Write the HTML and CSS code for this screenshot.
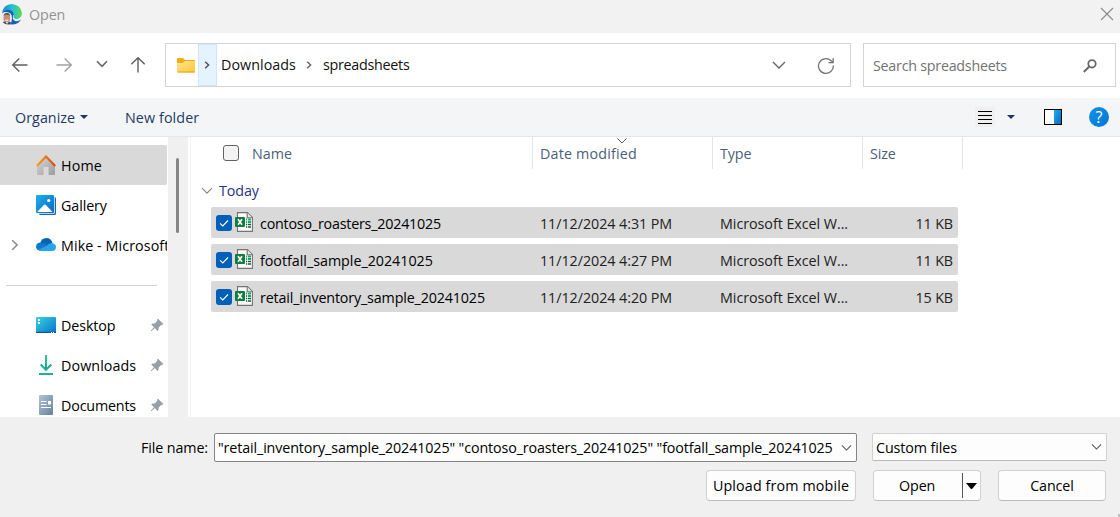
FILE: index.html
```html
<!DOCTYPE html>
<html lang="en">
<head>
<meta charset="utf-8">
<title>Open</title>
<link rel="stylesheet" href="styles.css">
</head>
<body>
<svg width="0" height="0" class="defs">
  <defs>
    <linearGradient id="edge" x1="0" y1="0" x2="1" y2="0"><stop offset="0" stop-color="#1287d8"/><stop offset=".5" stop-color="#25bfd0"/><stop offset="1" stop-color="#62d957"/></linearGradient>
    <linearGradient id="folder" x1="0" y1="0" x2="1" y2="1"><stop offset="0" stop-color="#ffe597"/><stop offset="1" stop-color="#ffc62f"/></linearGradient>
    <linearGradient id="blue" x1="0" y1="0" x2="1" y2="1"><stop offset="0" stop-color="#1eb0ee"/><stop offset="1" stop-color="#0869c4"/></linearGradient>
    <linearGradient id="wall" x1="0" y1="0" x2="1" y2="1"><stop offset="0" stop-color="#d8d8d8"/><stop offset="1" stop-color="#9c9c9c"/></linearGradient>
    <linearGradient id="roof" x1="0" y1="0" x2="1" y2="0"><stop offset="0" stop-color="#f9a11b"/><stop offset="1" stop-color="#d84a12"/></linearGradient>
    <linearGradient id="desk" x1="0" y1="0" x2="1" y2="1"><stop offset="0" stop-color="#35d4e2"/><stop offset="1" stop-color="#0b72c9"/></linearGradient>
    <linearGradient id="down" x1="0" y1="0" x2="0" y2="1"><stop offset="0" stop-color="#38c98c"/><stop offset="1" stop-color="#14a79b"/></linearGradient>
    <linearGradient id="doc" x1="0" y1="0" x2="1" y2="1"><stop offset="0" stop-color="#b2c3d6"/><stop offset="1" stop-color="#65819f"/></linearGradient>
    <symbol id="excel" viewBox="0 0 18 20">
      <path d="M2.5.6H12.4L17.4 5.6V19.4H2.5Z" fill="#fafafa" stroke="#737373" stroke-width="1.1"/>
      <path d="M12.2.8V5.8H17.2" fill="#e6e6e6" stroke="#737373" stroke-width="1.1"/>
      <path d="M11 7.500H12.200M13 7.500H16M11 10H12.200M13 10H16" stroke="#21a567" stroke-width="1.8"/>
      <path d="M11 12.500H12.200M13 12.500H16M11 15H12.200M13 15H16" stroke="#185c37" stroke-width="1.6"/>
      <rect y="5" width="10" height="10" rx="1" fill="#107c41"/>
      <path d="M3 7.2L7 12.8M7 7.2L3 12.8" stroke="#fff" stroke-width="1.6"/>
    </symbol>
    <symbol id="check" viewBox="0 0 16 16"><rect width="16" height="16" rx="3" fill="#005fb8"/><path d="M4 8.3L6.8 11L12 5.5" fill="none" stroke="#fff" stroke-width="1.1"/></symbol>
    <symbol id="pin" viewBox="0 0 14 14"><path d="M8 .7L13.3 6 12.3 7.1 11.4 6.8 8.7 9.6 8.5 12 7.5 12.9 4.8 10.1 1.3 13.3.7 12.7 3.9 9.2 1.3 6.5 2.3 5.5 4.8 5.4 7.3 2.7 7 1.7Z" fill="#949fa9"/></symbol>
    <symbol id="chev" viewBox="0 0 12 8"><path d="M1 1.2L6 6.2L11 1.2" fill="none" stroke="currentColor" stroke-width="1.2"/></symbol>
  </defs>
</svg>
<div class="dialog">
  <header class="titlebar">
    <svg class="app" width="21" height="21" viewBox="0 0 21 21">
      <path d="M1 10Q2 0 11 0Q20 1 21 9Q21 14 16 15Q11 15 13 11Q12 7 8 7L1 14Z" fill="url(#edge)"/>
      <path d="M1 10Q4 5 9 6Q12 7 13 10Q10 15 14 17Q17 18 20 15.500Q17 21 10 20.500L3 17Z" fill="#1263ae"/>
      <path d="M0 13Q0 8 5 8Q11 8 11 14Q11 18 9 20Q3 20 0 15Z" fill="#eceaea"/>
      <ellipse cx="5.800" cy="14" rx="3.300" ry="4.300" fill="#c98e78"/>
      <path d="M2.500 12Q3 9 6 9Q9 9 9 12L7.500 10.800H4Z" fill="#5a4640"/>
      <path d="M4.300 16.200H7.300" stroke="#fff"/>
      <path d="M1.500 18L4 17.500 6 20 8 17.500 10 18.500 9 20.500Q4 21 1.500 18Z" fill="#394b66"/>
    </svg>
    <span class="title">Open</span>
    <svg class="close" width="14" height="14" viewBox="0 0 14 14"><path d="M1 1L13 13M13 1L1 13" stroke="#8a8a8a" stroke-width="1.1"/></svg>
  </header>
  <nav class="navbar">
    <div class="arrows">
      <svg width="18" height="16" viewBox="0 0 18 16"><path d="M16.500 8H2M8.300 1.500L1.700 8L8.300 14.500" fill="none" stroke="#5f5f5f" stroke-width="1.400"/></svg>
      <svg width="18" height="16" viewBox="0 0 18 16"><path d="M1.500 8H16M9.700 1.500L16.300 8L9.700 14.500" fill="none" stroke="#a2a2a2" stroke-width="1.400"/></svg>
      <svg width="12" height="8" viewBox="0 0 12 8"><path d="M1 1.300L6 6.300L11 1.300" fill="none" stroke="#666" stroke-width="1.600"/></svg>
      <svg width="16" height="18" viewBox="0 0 16 18"><path d="M8 16.500V2M1.300 8.300L8 1.700L14.700 8.300" fill="none" stroke="#5f5f5f" stroke-width="1.400"/></svg>
    </div>
    <div class="address">
      <svg class="fold" width="18" height="15" viewBox="0 0 18 15"><path d="M0 1Q0 0 1 0H6L8 2H17Q18 2 18 3V6H0Z" fill="#f0ac13"/><path d="M0 5H5.500L8 3H17Q18 3 18 4V14Q18 14.500 17 14.500H1Q0 14.500 0 13.500Z" fill="url(#folder)"/><path d="M.5 14H17.500" stroke="#e2a01a"/></svg>
      <span class="crumb-arrow"><svg width="6" height="8" viewBox="0 0 6 8"><path d="M1.200.8L4.600 4L1.200 7.200" fill="none" stroke="#555" stroke-width="1.500"/></svg></span>
      <span class="crumb first">Downloads</span>
      <svg width="6" height="8" viewBox="0 0 6 8"><path d="M1.200.8L4.600 4L1.200 7.200" fill="none" stroke="#666" stroke-width="1.500"/></svg>
      <span class="crumb second">spreadsheets</span>
      <svg class="drop" width="14" height="8" viewBox="0 0 14 8"><path d="M1 1L7 7L13 1" fill="none" stroke="#666" stroke-width="1.400"/></svg>
      <svg class="reload" width="18" height="18" viewBox="0 0 18 18"><path d="M16.300 8.500A7.400 7.400 0 1 1 13.800 3.500L16 5.300M16.200 1V5.500H11.500" fill="none" stroke="#707070" stroke-width="1.250"/></svg>
    </div>
    <div class="search"><span>Search spreadsheets</span>
      <svg width="14" height="14" viewBox="0 0 14 14"><circle cx="9" cy="4.800" r="3.700" fill="none" stroke="#696969" stroke-width="1.800"/><path d="M6.300 7.500L.8 13" stroke="#696969" stroke-width="2"/></svg>
    </div>
  </nav>
  <div class="toolbar">
    <span class="organize">Organize</span><i class="tri"></i><span class="newfolder">New folder</span>
    <svg class="view" width="20" height="20" viewBox="0 0 20 20"><path fill="#f0f0f0" d="M0 0H20V20H0Z"/><path d="M3 4.500H17M3 8.500H17M3 12.500H17M3 16.500H17" stroke="#000"/></svg>
    <i class="tri"></i>
    <svg class="pane" width="18" height="16" viewBox="0 0 18 16"><rect x=".5" y=".5" width="17" height="15" fill="#fff" stroke="#000"/><path d="M10 1H17V15H10Z" fill="url(#blue)"/></svg>
    <span class="help">?</span>
  </div>
  <main class="body">
    <aside class="side">
      <div class="item active"><svg width="20" height="20" viewBox="0 0 20 20"><path d="M10 2L19 10V19Q19 20 18 20H12.500V12H7.500V20H2Q1 20 1 19V10Z" fill="url(#wall)"/><path d="M.8 11L10 1.500L19.200 11" fill="none" stroke="url(#roof)" stroke-width="2.200"/></svg><span class="s-home">Home</span></div>
      <div class="item"><svg width="20" height="20" viewBox="0 0 20 20"><rect x="3" y="2" width="17" height="18" rx="1.500" fill="#1767b5"/><rect width="18.800" height="18.800" rx="1" fill="#e9f4fc"/><rect width="18" height="18" rx="1" fill="url(#blue)"/><path d="M1.200 17L7.800 10Q8.800 9.100 9.800 10L16.500 17Z" fill="#fff"/><circle cx="12.700" cy="5.500" r="1.600" fill="#fff"/></svg><span class="s-gallery">Gallery</span></div>
      <div class="item"><svg class="expand" width="8" height="12" viewBox="0 0 8 12"><path d="M1.200 1.200L6.200 6L1.200 10.800" fill="none" stroke="#858585" stroke-width="1.400"/></svg><svg width="20" height="20" viewBox="0 0 20 20"><path d="M4 9Q5 3 10.500 3Q15 3 16.500 8L10 13Z" fill="#0864b2"/><path d="M4 15.500Q0 15 0 11.500Q.5 7.500 4.500 7.500Q7 7.500 13 11L8 16Z" fill="#0f78d1"/><path d="M2 15L11 10.500Q14 7.500 17 8.200Q20 9.300 20 12Q20 16 16 16H5Q3 16 2 15Z" fill="#27a4ec"/></svg><span class="s-mike">Mike - Microsoft</span></div>
      <div class="rule"></div>
      <div class="item"><svg width="20" height="20" viewBox="0 0 20 20"><rect y="2" width="20" height="16" rx="1" fill="url(#desk)"/><path d="M0 17.400H20" stroke="#115688" stroke-width="1.200"/><path d="M2 4H4V6H2ZM2 7H4V9H2ZM15 17H16V18H15ZM17 17H18V18H17Z" fill="#fff"/></svg><span class="s-desktop">Desktop</span><svg class="pin" width="14" height="14"><use href="#pin"/></svg></div>
      <div class="item"><svg width="20" height="20" viewBox="0 0 20 20"><path d="M9 0H11V13H9Z" fill="url(#down)"/><path d="M4.700 9.500L10 14.800L15.300 9.500" fill="none" stroke="#1dad93" stroke-width="2"/><path d="M3 18H17V20H3Z" fill="#20b486"/></svg><span class="s-downloads">Downloads</span><svg class="pin" width="14" height="14"><use href="#pin"/></svg></div>
      <div class="item"><svg width="20" height="20" viewBox="0 0 20 20"><rect x="3" width="14" height="20" rx="1" fill="url(#doc)"/><path d="M5 6.500H10.500M5 9.500H10.500M5 12.500H15" stroke="#fff" stroke-width="1.200"/><path d="M12 6H15V9.500H12Z" fill="#fff"/></svg><span class="s-documents">Documents</span><svg class="pin" width="14" height="14"><use href="#pin"/></svg></div>
    </aside>
    <div class="scroll"><i></i></div>
    <section class="files">
      <div class="columns">
        <div class="c-name"><i class="box"></i><span class="h-name">Name</span></div>
        <div class="c"><span class="h-date">Date modified</span><svg class="sort" width="10" height="6" viewBox="0 0 10 6"><path d="M.5.5L5 5L9.500.5" fill="none" stroke="#555"/></svg></div>
        <div class="c"><span class="h-type">Type</span></div>
        <div class="c"><span class="h-size">Size</span></div>
        <div class="c end"></div>
      </div>
      <div class="group"><svg width="12" height="8"><use href="#chev"/></svg><span>Today</span></div>
      <div class="rows">
        <div class="row"><svg width="16" height="16"><use href="#check"/></svg><svg class="xl" width="18" height="20"><use href="#excel"/></svg><span class="file f1">contoso_roasters_20241025</span><span class="date">11/12/2024 4:31 PM</span><span class="kind">Microsoft Excel W...</span><span class="size">11 KB</span></div>
        <div class="row"><svg width="16" height="16"><use href="#check"/></svg><svg class="xl" width="18" height="20"><use href="#excel"/></svg><span class="file f2">footfall_sample_20241025</span><span class="date">11/12/2024 4:27 PM</span><span class="kind">Microsoft Excel W...</span><span class="size">11 KB</span></div>
        <div class="row"><svg width="16" height="16"><use href="#check"/></svg><svg class="xl" width="18" height="20"><use href="#excel"/></svg><span class="file f3">retail_inventory_sample_20241025</span><span class="date">11/12/2024 4:20 PM</span><span class="kind">Microsoft Excel W...</span><span class="size">15 KB</span></div>
      </div>
    </section>
  </main>
  <footer class="footer">
    <div class="fields">
      <label>File name:</label>
      <div class="combo name"><span class="value">"retail_inventory_sample_20241025" "contoso_roasters_20241025" "footfall_sample_20241025</span><svg width="11" height="8"><use href="#chev"/></svg></div>
      <div class="combo type"><span class="value">Custom files</span><svg width="11" height="8"><use href="#chev"/></svg></div>
    </div>
    <div class="buttons">
      <div class="btn upload"><span>Upload from mobile</span></div>
      <div class="btn open"><span>Open</span><i class="split"></i><i class="tri black"></i></div>
      <div class="btn cancel"><span>Cancel</span></div>
    </div>
    <i class="grip"></i>
  </footer>
</div>
</body>
</html>
```
FILE: styles.css
```css
* { box-sizing: border-box; }
body { margin: 0; font: 14.3px/20px "Open Sans", "Noto Sans", sans-serif; color: #111; letter-spacing: -0.1px; }
.defs { position: absolute; }
svg { flex: none; display: block; }
span { white-space: nowrap; }
.dialog { width: 1120px; height: 517px; display: flex; flex-direction: column; background: #fff; overflow: hidden; }
.titlebar { height: 33px; background: #f2f2f2; display: flex; align-items: flex-start; padding: 4px 6px 0 1px; }
.title { margin: 1px auto 0 7px; color: #929292; }
.close { margin-top: 3px; }
.navbar { height: 65px; display: flex; padding-top: 10px; }
.arrows { width: 165px; height: 44px; display: flex; align-items: center; padding-left: 11px; }
.arrows svg:nth-child(2) { margin-left: 26px; }
.arrows svg:nth-child(3) { margin: -2px 0 0 23px; }
.arrows svg:nth-child(4) { margin-left: 22px; }
.address { width: 686px; height: 44px; border: 1px solid #d4d4d4; display: flex; align-items: center; padding-left: 11px; }
.crumb-arrow { width: 19px; height: 42px; margin-left: 3px; background: #e5f3ff; border: 1px solid #cce8ff; display: flex; align-items: center; justify-content: center; }
.crumb-arrow svg { margin-right: 1px; }
.crumb.first { margin: 0 9px 0 4px; width: 76px; letter-spacing: 0.05px; }
.crumb.second { margin-left: 11px; letter-spacing: -0.27px; }
.drop { margin-left: auto; }
.reload { margin: 2px 15px 0 31px; }
.search { width: 253px; height: 44px; margin-left: 12px; border: 1px solid #d4d4d4; display: flex; align-items: center; justify-content: space-between; padding: 2px 18px 0 9px; color: #737373; letter-spacing: -0.25px; }
.toolbar { height: 38px; background: #f4f5f7; display: flex; align-items: center; padding: 0 11px 0 15px; color: #1d3a66; }
.organize { width: 61px; padding-top: 1px; letter-spacing: 0.05px; }
.tri { margin-left: 4px; border: solid transparent; border-width: 4px 4px 0; border-top-color: #1d3763; width: 8px; height: 4px; }
.newfolder { margin-left: 37px; padding-top: 1px; letter-spacing: 0.1px; }
.view { margin-left: auto; }
.toolbar .view + .tri { margin-left: 12px; }
.pane { margin-left: 29px; }
.help { width: 20px; height: 20px; margin-left: 27px; border-radius: 50%; background: linear-gradient(135deg, #1593e3, #0077d2); color: #fff; text-align: center; font-size: 16px; }
.body { height: 281px; border-top: 1px solid #e6e6e8; display: flex; }
.side { width: 168px; padding-top: 8px; overflow: hidden; color: #000; }
.item { height: 40px; width: 167px; padding-left: 36px; display: flex; align-items: center; overflow: hidden; position: relative; }
.item span { margin: 2px 0 0 5px; }
.s-home { letter-spacing: 0.15px; }
.s-mike { letter-spacing: 0.08px; }
.s-downloads { letter-spacing: 0.08px; }
.s-documents { letter-spacing: -0.17px; }
.active { background: #d9d9d9; border-radius: 0 2px 2px 0; }
.expand { position: absolute; left: 11px; top: 14px; }
.item .pin { margin: 0 3px 0 auto; }
.rule { height: 40px; margin: 0 11px 0 6px; background: linear-gradient(#d2d5d5, #d2d5d5) 0 20px / 100% 1px no-repeat; }
.scroll { width: 20px; background: #f0f0f0; padding: 21px 0 0 8px; }
.scroll i { display: block; width: 3px; height: 75px; border-radius: 2px; background: #858585; }
.files { flex: 1; border-left: 1px solid #fff; padding-left: 1px; background: linear-gradient(#f5f5f5, #f5f5f5) 1px 0 / 1px 100% no-repeat; }
.columns { height: 32px; display: grid; grid-template-columns: 342px 180px 150px 100px 1px; color: #4c607a; }
.c-name { display: flex; align-items: center; padding-left: 33px; }
.h-name { margin: 2px 0 0 13px; letter-spacing: 0.05px; }
.h-date { letter-spacing: 0.18px; }
.box { width: 16px; height: 16px; border: 1px solid #626262; border-radius: 3px; background: #f3f3f3; }
.c { border-left: 1px solid #e5e5e5; padding: 7px 0 0 7px; position: relative; }
.sort { position: absolute; left: 84px; top: 1px; }
.group { height: 38px; display: flex; align-items: center; padding: 6px 0 0 11px; color: #1e3287; }
.group svg { color: #858585; }
.group span { margin-left: 6px; }
.rows { display: flex; flex-direction: column; gap: 6px; padding-left: 21px; }
.row { width: 747px; height: 31px; border-radius: 2px; background: #d9d9d9; display: flex; align-items: center; padding: 0 5px; }
.row span { margin-top: 2px; color: #222; }
.row .xl { margin: -2px 7px 0 3px; }
.row .file { width: 280px; color: #000; }
.f1 { letter-spacing: -0.21px; }
.f2 { letter-spacing: -0.02px; }
.f3 { letter-spacing: -0.15px; }
.date { width: 180px; letter-spacing: -0.05px; }
.kind { letter-spacing: -0.04px; }
.size { margin-left: auto; }
.footer { height: 100px; background: #f0f0f0; padding-top: 16px; position: relative; color: #000; }
.fields { display: flex; }
label { width: 214px; padding: 5px 6px 0 0; text-align: right; }
.combo { height: 28px; border: 1px solid #d0d0d0; border-radius: 2px; background: #fdfdfd; display: flex; align-items: center; padding: 0 4px 0 3px; color: #000; }
.combo svg { color: #555; margin-left: 7px; }
.value { flex: 1; min-width: 0; overflow: hidden; padding-top: 1px; }
.combo.name { width: 643px; height: 29px; border-color: #858585; letter-spacing: -0.12px; }
.combo.type { width: 235px; margin-left: 15px; border-bottom-color: #b9b9b9; }
.buttons { display: flex; padding: 8px 14px 0 706px; }
.btn { height: 31px; border: 1px solid #d0d0d0; border-bottom-color: #bcbcbc; border-radius: 4px; background: #fdfdfd; display: flex; align-items: center; justify-content: center; }
.upload { width: 150px; letter-spacing: 0.13px; }
.open { width: 108px; margin-left: 17px; justify-content: flex-start; padding-left: 25px; }
.open span { width: 36px; }
.split { width: 1px; height: 25px; margin-left: 27px; background: #555; }
.tri.black { margin-left: 3px; width: 11px; height: 6px; border-width: 6px 5.5px 0; border-top-color: #000; }
.cancel { width: 108px; margin-left: 17px; }
.grip { position: absolute; right: 0; bottom: 0; width: 2px; height: 3px; background: #c0c0c0; }
```
